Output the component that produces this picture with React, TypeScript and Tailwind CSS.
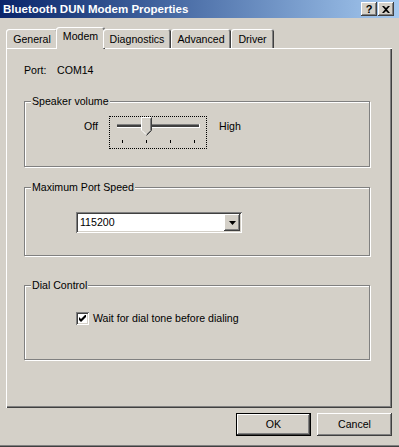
import { Fragment } from 'react'

// classic Win2000 bevels
const raised =
  'shadow-[inset_-1px_-1px_#404040,inset_1px_1px_#ffffff,inset_-2px_-2px_#808080,inset_2px_2px_#d4d0c8]'
const defaultBtn =
  'shadow-[inset_0_0_0_1px_#000000,inset_-2px_-2px_#404040,inset_2px_2px_#ffffff,inset_-3px_-3px_#808080]'
const sunken =
  'shadow-[inset_1px_1px_#808080,inset_-1px_-1px_#ffffff,inset_2px_2px_#404040,inset_-2px_-2px_#d4d0c8]'
const etched = 'border border-[#808080] shadow-[inset_1px_1px_#ffffff,1px_1px_#ffffff]'

const tabs = [
  { label: 'General', w: 'w-[52px]' },
  { label: 'Modem', w: 'w-[49px]', active: true },
  { label: 'Diagnostics', w: 'w-[68px]' },
  { label: 'Advanced', w: 'w-[60px]' },
  { label: 'Driver', w: 'w-[43px]' },
]

function Group({ title, className, children }: { title: string; className: string; children: React.ReactNode }) {
  return (
    <div className={`relative w-[346px] ${etched} ${className}`}>
      <span className="absolute left-[6px] -top-[7px] bg-[#d4d0c8] px-[1px] leading-[13px]">{title}</span>
      {children}
    </div>
  )
}

function Slider() {
  return (
    <div className="w-[98px] h-[33px] border border-dotted border-black">
      <svg width="96" height="31" viewBox="1 1 96 31">
        {/* groove */}
        <rect x="8" y="8" width="83" height="1" fill="#808080" />
        <rect x="8" y="9" width="83" height="2" fill="#404040" />
        <rect x="8" y="11" width="83" height="1" fill="#ffffff" />
        <rect x="90" y="8" width="1" height="4" fill="#ffffff" />
        {/* thumb */}
        <polygon points="32,1 43,1 43,14 38,19 37,19 32,14" fill="#d4d0c8" />
        <polyline points="32,14 32,1 42,1" fill="none" stroke="#ffffff" strokeWidth="1" transform="translate(0.5,0.5)" />
        <polyline points="42,1 42,14 37,19" fill="none" stroke="#404040" strokeWidth="1" transform="translate(0.5,0.5)" />
        <polyline points="41,2 41,14 37,18" fill="none" stroke="#808080" strokeWidth="1" transform="translate(0.5,0.5)" />
        <line x1="33" y1="14.5" x2="37" y2="18.5" stroke="#ffffff" strokeWidth="1" />
        {/* ticks */}
        {[13, 37, 61, 85].map((x) => (
          <rect key={x} x={x} y="24" width="1" height="3" fill="#000000" />
        ))}
      </svg>
    </div>
  )
}

export default function App() {
  return (
    <div className="w-[399px] h-[447px] bg-[#d4d0c8] flex flex-col font-['Liberation_Sans',Arial,sans-serif] text-[10.6px] text-black overflow-hidden">
      {/* Title bar */}
      <div className="h-[18px] flex items-center justify-between bg-gradient-to-r from-[#0a246a] to-[#a6caf0] pl-[3px] pr-[5px]">
        <span className="text-white font-bold text-[11.5px] leading-[18px]">Bluetooth DUN Modem Properties</span>
        <div className="flex gap-[1px]">
          <div className={`w-[16px] h-[14px] bg-[#d4d0c8] ${raised} flex items-center justify-center font-bold text-[11px] leading-none`}>
            ?
          </div>
          <div className={`w-[16px] h-[14px] bg-[#d4d0c8] ${raised} flex items-center justify-center`}>
            <svg width="8" height="7" viewBox="0 0 8 7">
              <path d="M0 0h2l2 2 2-2h2L5 3.5 8 7H6L4 5 2 7H0l3-3.5z" fill="#000" />
            </svg>
          </div>
        </div>
      </div>

      {/* Tabs */}
      <div className="relative z-10 h-[30px] flex items-end pl-[6px]">
        {tabs.map((t) => (
          <Fragment key={t.label}>
            {t.active ? (
              <div
                className={`${t.w} -mx-[2px] -mb-px h-[22px] bg-[#d4d0c8] rounded-t-[3px] shadow-[inset_1px_1px_#ffffff,inset_-1px_0_#404040,inset_-2px_0_#808080] pt-[3px] text-center leading-[13px] shrink-0`}
              >
                {t.label}
              </div>
            ) : (
              <div
                className={`${t.w} h-[19px] bg-[#d4d0c8] rounded-t-[3px] shadow-[inset_1px_1px_#ffffff,inset_-1px_0_#404040,inset_-2px_0_#808080] pt-[4px] text-center leading-[13px] shrink-0`}
              >
                {t.label}
              </div>
            )}
          </Fragment>
        ))}
      </div>

      {/* Panel */}
      <div
        className={`ml-[6px] w-[386px] h-[360px] shadow-[inset_1px_1px_#ffffff,inset_-1px_-1px_#404040,inset_-2px_-2px_#808080] pt-[16px] pl-[18px]`}
      >
        <div className="flex leading-[13px]">
          <span className="w-[33px]">Port:</span>
          <span>COM14</span>
        </div>

        <Group title="Speaker volume" className="mt-[24px] h-[66px]">
          <div className="flex items-start pt-[14px] pl-[59px]">
            <span className="w-[25px] mt-[4px] leading-[13px]">Off</span>
            <Slider />
            <span className="ml-[12px] mt-[4px] leading-[13px]">High</span>
          </div>
        </Group>

        <Group title="Maximum Port Speed" className="mt-[20px] h-[69px]">
          <div className="pt-[24px] pl-[51px]">
            <div className={`w-[166px] h-[21px] bg-white ${sunken} flex items-center justify-between pl-[4px] pr-[2px]`}>
              <span className="leading-[13px]">115200</span>
              <div className={`w-[16px] h-[17px] bg-[#d4d0c8] ${raised} flex items-center justify-center`}>
                <svg width="7" height="4" viewBox="0 0 7 4">
                  <polygon points="0,0 7,0 3.5,4" fill="#000" />
                </svg>
              </div>
            </div>
          </div>
        </Group>

        <Group title="Dial Control" className="mt-[29px] h-[75px]">
          <div className="pt-[26px] pl-[51px] flex items-center gap-[4px]">
            <div className={`w-[13px] h-[13px] bg-white ${sunken} flex items-center justify-center`}>
              <svg width="7" height="7" viewBox="0 0 7 7">
                <path d="M0 2v3l2 2 5-5V-1L2 4z" fill="#000" />
              </svg>
            </div>
            <span className="leading-[13px]">Wait for dial tone before dialing</span>
          </div>
        </Group>
      </div>

      {/* Buttons */}
      <div className="mt-[5px] flex justify-end gap-[6px] pr-[7px]">
        <div className={`w-[75px] h-[23px] ${defaultBtn} flex items-center justify-center leading-[13px]`}>OK</div>
        <div className={`w-[75px] h-[23px] ${raised} flex items-center justify-center leading-[13px]`}>Cancel</div>
      </div>

      <div className="mt-auto h-[2px] border-t border-[#808080] border-b-[#404040] border-b" />
    </div>
  )
}
